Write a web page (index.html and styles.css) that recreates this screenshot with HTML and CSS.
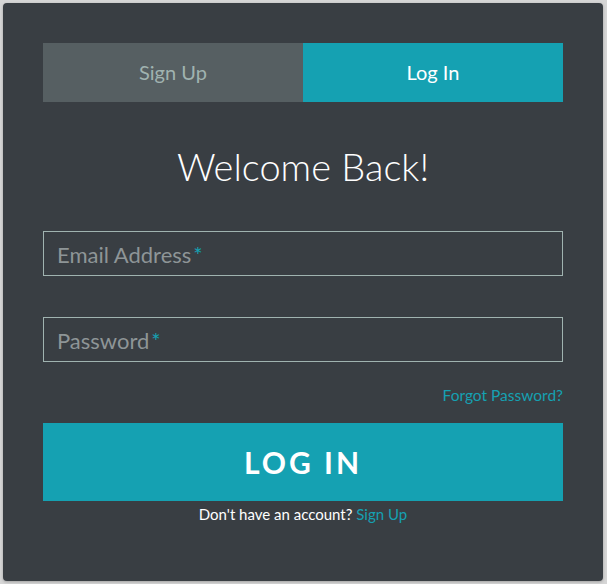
FILE: index.html
```html
<!DOCTYPE html>
<html lang="en">
<head>
    <meta charset="UTF-8">
    <title>Log In</title>
    <link rel="stylesheet" href="styles.css">
</head>
<body>
    <div class="form">
        <ul class="tab-group">
            <li class="tab"><a href="#signup">Sign Up</a></li>
            <li class="tab active"><a href="#login">Log In</a></li>
        </ul>

        <h1>Welcome Back!</h1>

        <form>
            <div class="field-wrap">
                <label>Email Address<span class="req">*</span></label>
                <input type="email">
            </div>
            <div class="field-wrap">
                <label>Password<span class="req">*</span></label>
                <input type="password">
            </div>
            <p class="forgot"><a href="#">Forgot Password?</a></p>
            <button class="button">Log In</button>
        </form>

        <p class="signup-note">Don't have an account? <a href="#signup">Sign Up</a></p>
    </div>
</body>
</html>
```

FILE: styles.css
```css
* {
    box-sizing: border-box;
}
body {
    margin: 0;
    padding: 3px 4px 3px 3px;
    background: #d6d6d6;
    font-family: Lato, "Open Sans", sans-serif;
}
a {
    text-decoration: none;
    color: #15a1b2;
}
.form {
    width: 600px;
    height: 578px;
    background: #393e43;
    padding: 40px;
    border-radius: 4px;
    box-shadow: 0 1px 3px rgba(0,0,0,0.25);
}
.tab-group {
    list-style: none;
    margin: 0;
    padding: 0;
    display: flex;
}
.tab {
    flex: 1;
}
.tab a {
    display: block;
    height: 59px;
    line-height: 59px;
    text-align: center;
    font-size: 20px;
    background: #565f62;
    color: #a0b3b0;
}
.tab.active a {
    background: #15a1b2;
    color: #fff;
}
h1 {
    margin: 39px 0 40px;
    text-align: center;
    color: #fff;
    font-weight: 300;
    font-size: 38px;
    line-height: 50px;
}
.field-wrap {
    position: relative;
    margin-bottom: 41px;
}
.field-wrap label {
    position: absolute;
    left: 14px;
    top: 10px;
    font-size: 22px;
    color: #8e9597;
}
.req {
    color: #15a1b2;
    margin-left: 2px;
}
.field-wrap input {
    display: block;
    width: 100%;
    height: 45px;
    background: none;
    border: 1px solid #a0b3b0;
    border-radius: 0;
    color: #fff;
    font-size: 22px;
    padding: 5px 14px;
}
.forgot {
    margin: -18px 0 18px;
    text-align: right;
    font-size: 15.5px;
    line-height: 20px;
}
.button {
    display: block;
    width: 100%;
    height: 78px;
    border: 0;
    background: #15a1b2;
    color: #fff;
    font-family: inherit;
    font-size: 30px;
    font-weight: 700;
    letter-spacing: 3px;
    text-transform: uppercase;
}
.signup-note {
    margin: 3px 0 0;
    text-align: center;
    color: #fff;
    font-size: 15px;
    line-height: 20px;
}
```
